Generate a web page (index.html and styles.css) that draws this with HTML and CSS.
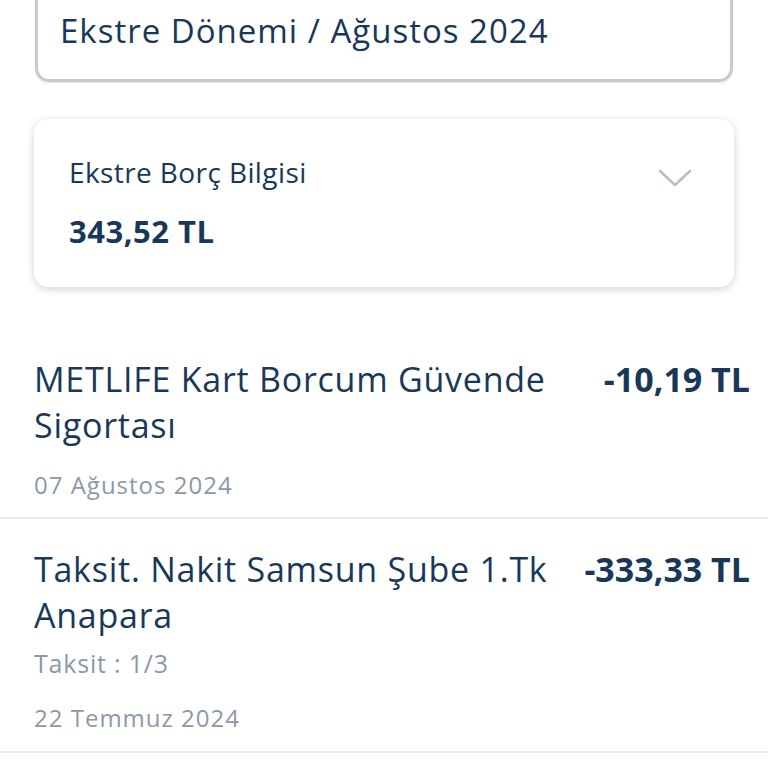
FILE: index.html
```html
<!DOCTYPE html>
<html lang="tr">
<head>
  <meta charset="UTF-8" />
  <meta name="viewport" content="width=device-width, initial-scale=1.0" />
  <title>Ekstre</title>
  <link rel="stylesheet" href="styles.css">
</head>
<body>
  <div class="page">
    <div class="period-card">
      <div class="period-text">Ekstre Dönemi / Ağustos 2024</div>
    </div>

    <div class="debt-card">
      <div class="debt-info">
        <div class="debt-label">Ekstre Borç Bilgisi</div>
        <div class="debt-amount">343,52 TL</div>
      </div>
      <svg class="chevron" width="34" height="20" viewBox="0 0 34 20">
        <polyline points="2,3 17,17 32,3" fill="none" stroke="#b9bec4" stroke-width="2.5" stroke-linecap="round" stroke-linejoin="round" />
      </svg>
    </div>

    <div class="tx-list">
      <div class="tx-item">
        <div class="tx-top">
          <div class="tx-title">METLIFE Kart Borcum Güvende Sigortası</div>
          <div class="tx-amount">-10,19 TL</div>
        </div>
        <div class="tx-date">07 Ağustos 2024</div>
      </div>
      <div class="tx-item">
        <div class="tx-top">
          <div class="tx-title">Taksit. Nakit Samsun Şube 1.Tk Anapara</div>
          <div class="tx-amount">-333,33 TL</div>
        </div>
        <div class="tx-sub">Taksit : 1/3</div>
        <div class="tx-date">22 Temmuz 2024</div>
      </div>
    </div>
  </div>
</body>
</html>
```

FILE: styles.css
```css
body {
  margin: 0;
  padding: 0;
  background: #ffffff;
  font-family: "Open Sans", Arial, sans-serif;
  color: #193859;
  overflow: hidden;
}
.page {
  width: 768px;
}
.period-card {
  margin: -60px 35px 0 35px;
  height: 142px;
  box-sizing: border-box;
  border: 3px solid #c7cbd0;
  border-radius: 0 0 14px 14px;
  box-shadow: 0 1px 2px rgba(0, 0, 0, 0.12);
  padding: 68px 0 0 22px;
}
.period-text {
  font-size: 33px;
  line-height: 40px;
  letter-spacing: 1px;
}
.debt-card {
  margin: 37px 34px 0 34px;
  height: 168px;
  box-sizing: border-box;
  border-radius: 14px;
  background: #fff;
  box-shadow: 0 2px 8px rgba(0, 0, 0, 0.18);
  display: flex;
  justify-content: space-between;
  padding: 35px 42px 0 35px;
}
.debt-label {
  font-size: 28px;
  line-height: 36px;
  letter-spacing: 0.4px;
}
.debt-amount {
  font-size: 31px;
  font-weight: 700;
  line-height: 40px;
  letter-spacing: 0.5px;
  margin-top: 21px;
}
.chevron {
  margin-top: 14px;
}
.tx-list {
  margin-top: 69px;
}
.tx-item {
  padding: 0 18px 0 34px;
  border-bottom: 2px solid #ececee;
}
.tx-item + .tx-item {
  padding-top: 27px;
}
.tx-top {
  display: flex;
  justify-content: space-between;
  gap: 24px;
}
.tx-title {
  font-size: 34px;
  line-height: 46px;
  letter-spacing: 0.75px;
}
.tx-amount {
  font-size: 34px;
  font-weight: 700;
  line-height: 46px;
  white-space: nowrap;
}
.tx-sub {
  font-size: 25px;
  color: #8d98a6;
  line-height: 34px;
  letter-spacing: 0.8px;
  margin-top: 8px;
}
.tx-date {
  font-size: 24px;
  color: #8d98a6;
  line-height: 34px;
  letter-spacing: 1px;
  padding: 20px 0 15px 0;
}
.tx-sub + .tx-date {
  padding: 21px 0 16px 0;
}
```
